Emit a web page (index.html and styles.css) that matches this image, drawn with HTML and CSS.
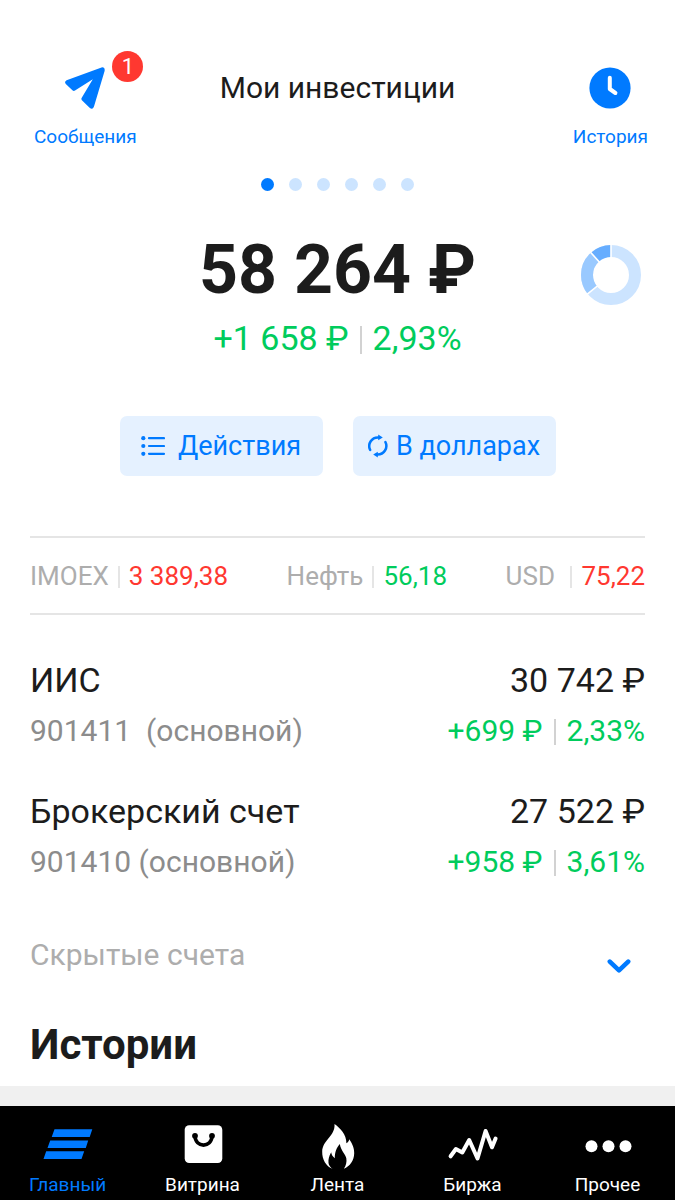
FILE: index.html
```html
<!DOCTYPE html>
<html lang="ru">
  <head>
    <meta charset="UTF-8" />
    <meta name="viewport" content="width=device-width, initial-scale=1.0" />
    <title>Мои инвестиции</title>
    <link rel="stylesheet" href="styles.css">
  </head>

  <body>
    <header class="header">
      <a href="#" class="header-link messages">
        <span class="header-icon">
          <svg width="42" height="42" viewBox="0 0 42 42" fill="#007aff">
            <path d="M37.5 .4Q41.2 -.2 40.6 4L30 39.6Q28.6 43.4 25.6 40.8L17.9 33.2Q17 32 17.6 31L28.8 12.2L11 23.6Q9.6 24.4 8.4 23.2L1.8 17Q0 14.6 2.6 13.2Z" />
          </svg>
          <span class="badge">1</span>
        </span>
        Сообщения
      </a>
      <h1>Мои инвестиции</h1>
      <a href="#" class="header-link history">
        <span class="header-icon">
          <svg width="42" height="42" viewBox="0 0 42 42" fill="none">
            <circle cx="21" cy="21" r="20.6" fill="#007aff" />
            <path d="M20.8 10.8V22L26.4 26" stroke="#fff" stroke-width="4" stroke-linecap="round" stroke-linejoin="round" />
          </svg>
        </span>
        История
      </a>
    </header>

    <main>
      <div class="dots">
        <span class="dot active"></span>
        <span class="dot"></span>
        <span class="dot"></span>
        <span class="dot"></span>
        <span class="dot"></span>
        <span class="dot"></span>
      </div>

      <section class="balance">
        <div class="total">58 264 ₽</div>
        <svg class="donut" width="60" height="60" viewBox="0 0 60 60" fill="none">
          <g stroke-width="12" transform="rotate(-90 30 30)">
            <circle cx="30" cy="30" r="24" stroke="#cce4ff" />
            <circle cx="30" cy="30" r="24" stroke="#99c9ff" pathLength="360" stroke-dasharray="87 273" stroke-dashoffset="-231" />
            <circle cx="30" cy="30" r="24" stroke="#66adff" pathLength="360" stroke-dasharray="42 318" stroke-dashoffset="-318" />
          </g>
          <path d="M30 30V-1M30 30L6 49.4M30 30L9.3 7" stroke="#fff" stroke-width="1.6" />
        </svg>
        <div class="total-change green">+1 658 ₽<i class="sep"></i>2,93%</div>
      </section>

      <div class="actions">
        <button class="btn list">
          <svg width="24" height="20" viewBox="0 0 24 20" fill="#007aff">
            <circle cx="2.3" cy="2.2" r="2.1" />
            <circle cx="2.3" cy="10" r="2.1" />
            <circle cx="2.3" cy="17.8" r="2.1" />
            <path d="M8 2.2H23M8 10H23M8 17.8H23" stroke="#007aff" stroke-width="2.2" stroke-linecap="round" />
          </svg>
          Действия
        </button>
        <button class="btn">
          <svg width="20" height="24" viewBox="0 0 20 24" fill="none" stroke="#007aff" stroke-width="2.5" stroke-linecap="round">
            <path d="M2.2 16A8.7 8.7 0 0 1 10.5 3.4" />
            <path d="M17.4 8A8.7 8.7 0 0 1 9.5 20.6" />
            <path d="M10.2 .4L14.8 3.4L10.2 6.2ZM9.8 17.8L5.2 20.6L9.8 23.6Z" fill="#007aff" stroke="none" />
          </svg>
          В долларах
        </button>
      </div>

      <section class="ticker">
        <div>IMOEX<i class="sep"></i><span class="red">3 389,38</span></div>
        <div>Нефть<i class="sep"></i><span class="green">56,18</span></div>
        <div>USD&nbsp;<i class="sep"></i><span class="red">75,22</span></div>
      </section>

      <section class="accounts">
        <div class="account">
          <div class="row name"><span>ИИС</span><span>30 742 ₽</span></div>
          <div class="row info">
            <span>901411&nbsp; (основной)</span>
            <span class="green">+699 ₽<i class="sep"></i>2,33%</span>
          </div>
        </div>
        <div class="account">
          <div class="row name"><span>Брокерский счет</span><span>27 522 ₽</span></div>
          <div class="row info">
            <span>901410 (основной)</span>
            <span class="green">+958 ₽<i class="sep"></i>3,61%</span>
          </div>
        </div>
      </section>

      <button class="hidden-accounts">
        Скрытые счета
        <svg width="24" height="20" viewBox="0 0 24 20" fill="none">
          <path d="M2.8 6.6L12 15.4L21.2 6.6" stroke="#007aff" stroke-width="4.6" stroke-linecap="round" stroke-linejoin="round" />
        </svg>
      </button>

      <h2>Истории</h2>
    </main>

    <div class="stories"></div>

    <nav class="tabs">
      <a href="#" class="tab current">
        <svg width="60" height="48" viewBox="0 0 60 48" fill="#007aff">
          <path d="M16.5 7.3H54.3L51.7 15H13.7ZM12.2 18.5H50.2L47.8 26H9.5ZM8.2 29.2H46.2L43.5 37H5.5Z" />
        </svg>
        Главный
      </a>
      <a href="#" class="tab">
        <svg width="60" height="48" viewBox="0 0 60 48">
          <rect x="11.7" y="3.3" width="37.6" height="37.7" rx="4.5" fill="#fff" />
          <circle cx="22" cy="13.8" r="2.9" />
          <circle cx="39" cy="13.8" r="2.9" />
          <path d="M22 13.8C22 26.2 39 26.2 39 13.8" fill="none" stroke="#000" stroke-width="3.6" />
        </svg>
        Витрина
      </a>
      <a href="#" class="tab">
        <svg width="60" height="48" viewBox="0 0 60 48" fill="#fff">
          <path d="M26.5 2C32 6 38.5 12 38.4 21.2C40 20.6 41 19 41.2 17.3C44 21 46.4 26 46.2 31.3C46 38.5 42 44.5 35.8 46.7C38 44 39 40 38.3 36.3C37.5 32 33 29 31.8 22C28.5 26 26.8 30 26.8 36.3C24.5 34.5 23.4 32.5 23.2 30.3C21 34 20.2 37.5 20.5 41C20.8 43.5 22.5 45.5 24.5 46.7C18 44.5 14 37 14.2 29.7C14.5 18 27.5 14 26.5 2Z" />
        </svg>
        Лента
      </a>
      <a href="#" class="tab">
        <svg width="60" height="48" viewBox="0 0 60 48" fill="none">
          <path d="M7.6 34.3L12.9 27L19.3 30.5L26.2 18L34.5 36.5L42.6 9L49 25.3L52.6 16.5" stroke="#fff" stroke-width="4" stroke-linecap="round" stroke-linejoin="round" />
        </svg>
        Биржа
      </a>
      <a href="#" class="tab">
        <svg width="60" height="48" viewBox="0 0 60 48" fill="#fff">
          <circle cx="13.5" cy="24.3" r="6" />
          <circle cx="30.5" cy="24.3" r="6" />
          <circle cx="47.5" cy="24.3" r="6" />
        </svg>
        Прочее
      </a>
    </nav>
  </body>
</html>
```
FILE: styles.css
```css
* {
  margin: 0;
  padding: 0;
  box-sizing: border-box;
}

body {
  min-height: 100vh;
  display: flex;
  flex-direction: column;
  font-family: Roboto, "Liberation Sans", sans-serif;
  color: #1c1c1c;
  background-color: #fff;
}

a {
  color: #007aff;
  text-decoration: none;
}

button {
  border: none;
  background: none;
  font-family: inherit;
  cursor: pointer;
}

svg {
  display: block;
}

.green {
  color: #00cc5c;
}

.red {
  color: #ff3830;
}

/* thin line between two values */
.sep {
  display: inline-block;
  width: 2px;
  height: 26px;
  margin: 0 11px;
  vertical-align: -4px;
  background-color: #d2d2d2;
}

.header {
  display: grid;
  grid-template-columns: 1fr auto 1fr;
  padding: 67px 27px 0;
}

.header-link {
  display: flex;
  flex-direction: column;
  align-items: center;
  gap: 16px;
  font-size: 19px;
  line-height: 24px;
}

.messages {
  justify-self: start;
  margin-left: 7px;
}

.history {
  justify-self: end;
}

.header-icon {
  position: relative;
}

.badge {
  position: absolute;
  left: 48px;
  top: -16px;
  width: 31px;
  height: 31px;
  border-radius: 50%;
  background-color: #ff3830;
  color: #fff;
  font-size: 22px;
  line-height: 31px;
  text-align: center;
}

h1 {
  font-size: 30px;
  font-weight: 400;
  line-height: 42px;
}

.dots {
  display: flex;
  justify-content: center;
  gap: 15px;
  margin-top: 29px;
}

.dot {
  width: 13px;
  height: 13px;
  border-radius: 50%;
  background-color: #cce4ff;
}

.dot.active {
  background-color: #007aff;
}

.balance {
  display: grid;
  grid-template-columns: 1fr auto 1fr;
  row-gap: 8px;
  margin-top: 39px;
  padding: 0 34px;
}

.total {
  grid-column: 2;
  font-size: 68px;
  font-weight: 700;
  line-height: 80px;
}

.donut {
  align-self: end;
  justify-self: end;
  margin-bottom: 5px;
}

.total-change {
  grid-column: 1 / -1;
  font-size: 34px;
  line-height: 40px;
  text-align: center;
}

.total-change .sep {
  height: 28px;
}

.actions {
  display: flex;
  justify-content: center;
  gap: 30px;
  margin-top: 58px;
}

.btn {
  display: flex;
  justify-content: center;
  align-items: center;
  gap: 8px;
  width: 203px;
  height: 60px;
  border-radius: 7px;
  background-color: #e5f1ff;
  color: #007aff;
  font-size: 27px;
}

.btn.list {
  gap: 13px;
}

.ticker {
  display: flex;
  justify-content: space-between;
  align-items: center;
  height: 79px;
  margin: 60px 30px 0;
  border-top: 2px solid #e5e5e5;
  border-bottom: 2px solid #e5e5e5;
  color: #adadad;
  font-size: 26px;
}

.ticker .sep {
  height: 22px;
  margin: 0 9px;
  vertical-align: -3px;
  background-color: #e5e5e5;
}

.accounts {
  display: flex;
  flex-direction: column;
  gap: 40px;
  margin: 45px 30px 0;
}

.row {
  display: flex;
  justify-content: space-between;
  line-height: 40px;
}

.name {
  font-size: 34px;
}

.info {
  margin-top: 11px;
  color: #8c8c8c;
  font-size: 30px;
}

.hidden-accounts {
  display: flex;
  justify-content: space-between;
  align-items: flex-end;
  width: 100%;
  margin-top: 53px;
  padding: 0 44px 0 30px;
  color: #adadad;
  font-size: 30px;
  line-height: 40px;
}

h2 {
  margin: 40px 30px 11px;
  font-size: 42px;
  line-height: 60px;
}

.stories {
  flex: 1;
  min-height: 20px;
  background-color: #f0f0f0;
}

.tabs {
  position: sticky;
  bottom: 0;
  display: grid;
  grid-template-columns: repeat(5, 1fr);
  padding: 16px 0 3px;
  background-color: #000;
}

.tab {
  display: flex;
  flex-direction: column;
  align-items: center;
  gap: 3px;
  color: #fff;
  font-size: 19px;
  line-height: 24px;
}

.tab.current {
  color: #007aff;
}
```
